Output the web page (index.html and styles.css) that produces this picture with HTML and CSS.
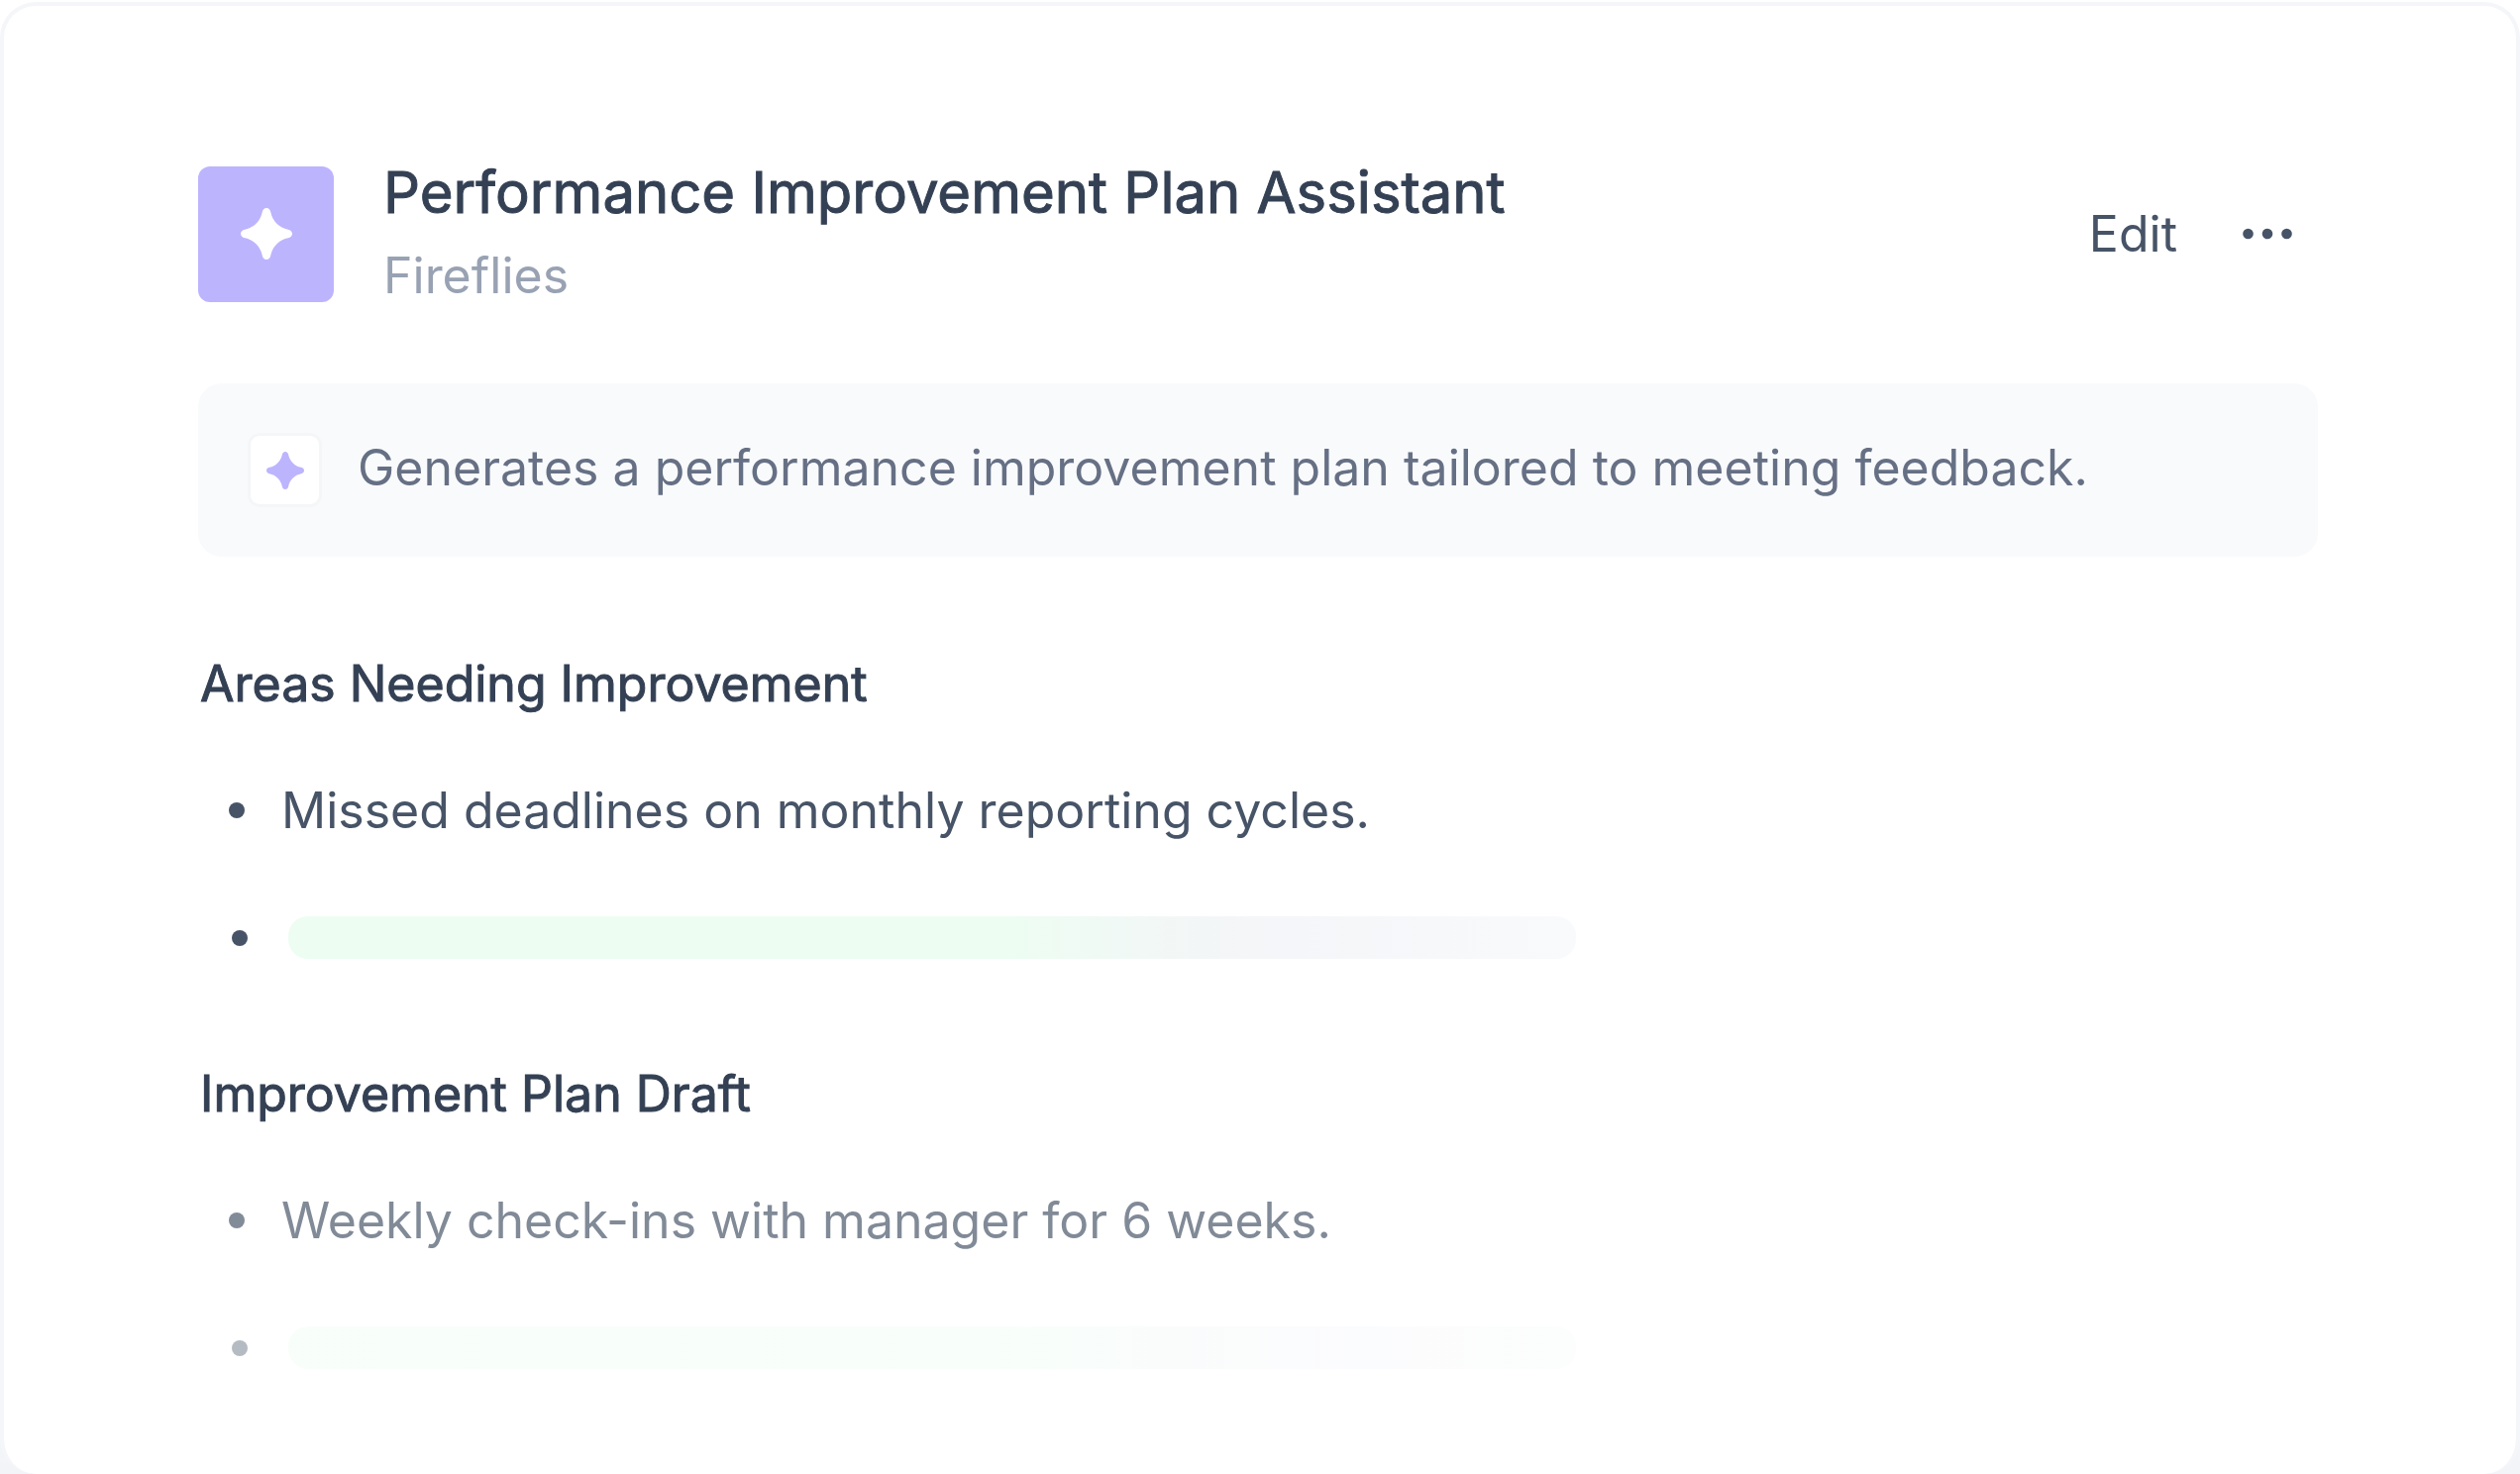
FILE: index.html
```html
<!DOCTYPE html>
<html lang="en">
<head>
    <meta charset="UTF-8">
    <meta name="viewport" content="width=device-width, initial-scale=1.0">
    <title>Performance Improvement Plan Assistant</title>
    <link rel="stylesheet" href="styles.css">
</head>
<body>

    <main class="card">
        <header class="header">
            <div class="app-icon">
                <svg class="sparkle" viewBox="0 0 52 52" aria-hidden="true">
                    <path d="M26 0C28.400 0 29.800 1.800 30.300 4.200C32 13 39 20 47.800 21.700C50.200 22.200 52 23.600 52 26S50.200 29.800 47.800 30.300C39 32 32 39 30.300 47.800C29.800 50.200 28.400 52 26 52S22.200 50.200 21.700 47.800C20 39 13 32 4.200 30.300C1.800 29.800 0 28.400 0 26S1.800 22.200 4.200 21.700C13 20 20 13 21.700 4.200C22.200 1.800 23.600 0 26 0Z"/>
                </svg>
            </div>
            <div class="titles">
                <h1>Performance Improvement Plan Assistant</h1>
                <p>Fireflies</p>
            </div>
            <div class="actions">
                <button class="edit-button" type="button">Edit</button>
                <button class="more-button" type="button" aria-label="More options">
                    <svg viewBox="0 0 50 12" aria-hidden="true">
                        <circle cx="5.500" cy="6" r="5.300"/>
                        <circle cx="25" cy="6" r="5.300"/>
                        <circle cx="44.500" cy="6" r="5.300"/>
                    </svg>
                </button>
            </div>
        </header>

        <div class="summary">
            <div class="summary-icon">
                <svg class="sparkle" viewBox="0 0 52 52" aria-hidden="true">
                    <path d="M26 0C28.400 0 29.800 1.800 30.300 4.200C32 13 39 20 47.800 21.700C50.200 22.200 52 23.600 52 26S50.200 29.800 47.800 30.300C39 32 32 39 30.300 47.800C29.800 50.200 28.400 52 26 52S22.200 50.200 21.700 47.800C20 39 13 32 4.200 30.300C1.800 29.800 0 28.400 0 26S1.800 22.200 4.200 21.700C13 20 20 13 21.700 4.200C22.200 1.800 23.600 0 26 0Z"/>
                </svg>
            </div>
            <p>Generates a performance improvement plan tailored to meeting feedback.</p>
        </div>

        <section class="section">
            <h2>Areas Needing Improvement</h2>
            <ul>
                <li>Missed deadlines on monthly reporting cycles.</li>
                <li class="loading-item"><span class="loading-bar"></span></li>
            </ul>
        </section>

        <section class="section section-faded">
            <h2>Improvement Plan Draft</h2>
            <ul>
                <li>Weekly check-ins with manager for 6 weeks.</li>
                <li class="loading-item"><span class="loading-bar"></span></li>
            </ul>
        </section>
    </main>

</body>
</html>
```
FILE: styles.css
```css
* {
    box-sizing: border-box;
}
body {
    margin: 0;
    padding-top: 2px;
    min-height: 100vh;
    display: flex;
    background: linear-gradient(#fff 80%, #f2f4f7);
    font-family: Inter, sans-serif;
    font-size: 50px;
    color: #475467;
}
h1, h2, p, ul {
    margin: 0;
    padding: 0;
}
.card {
    flex: 1;
    padding: 146px 200px 60px 196px;
    border: 4px solid #f5f6f9;
    border-bottom: none;
    border-radius: 36px;
    background-color: #fff;
}
.header {
    display: flex;
    align-items: center;
    gap: 50px;
}
.app-icon {
    display: flex;
    align-items: center;
    justify-content: center;
    width: 137px;
    height: 137px;
    border-radius: 12px;
    background-color: #bdb4fe;
}
.sparkle {
    width: 52px;
    height: 52px;
    fill: #fff;
}
.titles {
    flex: 1;
}
h1, h2 {
    font-weight: 400;
    color: #344054;
    -webkit-text-stroke: 1px #344054;
}
h1 {
    font-size: 58px;
    line-height: 84px;
}
.titles p {
    line-height: 84px;
    color: #98a2b3;
}
.actions {
    display: flex;
    align-items: center;
    gap: 66px;
    padding-right: 26px;
}
button {
    padding: 0;
    border: none;
    background: none;
    color: #475467;
    cursor: pointer;
}
.edit-button {
    font-family: Inter, sans-serif;
    font-size: 50px;
    line-height: 60px;
}
.more-button {
    display: flex;
}
.more-button svg {
    width: 50px;
    height: 12px;
    fill: #475467;
}
.summary {
    display: flex;
    align-items: center;
    gap: 36px;
    margin-top: 67px;
    padding: 50px;
    border-radius: 24px;
    background-color: #f9fafc;
}
.summary-icon {
    display: flex;
    align-items: center;
    justify-content: center;
    width: 75px;
    height: 75px;
    border: 3px solid #f4f6f8;
    border-radius: 12px;
    background-color: #fff;
}
.summary-icon .sparkle {
    width: 38px;
    height: 38px;
    fill: #bdb4fe;
}
.summary p {
    padding-bottom: 5px;
    line-height: 70px;
    color: #667085;
}
.section {
    margin-top: 32px;
}
.summary + .section {
    margin-top: 64px;
}
h2 {
    padding-left: 2px;
    font-size: 50px;
    line-height: 128px;
}
ul {
    padding-left: 31px;
    list-style: none;
}
li {
    display: flex;
    align-items: center;
    gap: 37px;
    height: 127px;
}
li::before {
    content: "";
    width: 16px;
    height: 16px;
    border-radius: 50%;
    background-color: #475467;
}
.loading-item {
    gap: 41px;
    padding-top: 4px;
    padding-left: 3px;
}
.loading-bar {
    width: 1300px;
    height: 43px;
    border-radius: 20px;
    background: linear-gradient(90deg, #edfdf2 56%, #f3f6f7 71%, #f5f6f9 78%, #f9fafb);
}
/* second section fades towards the bottom of the card */
.section-faded li {
    opacity: 0.68;
}
.section-faded .loading-item {
    opacity: 0.4;
}
```
